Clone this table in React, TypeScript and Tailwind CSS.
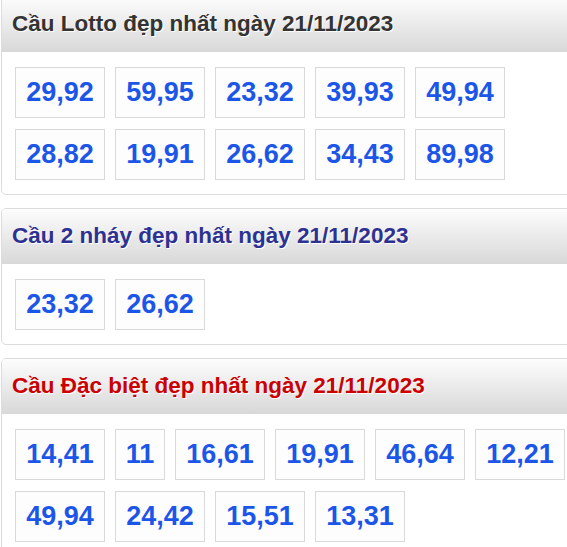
import React from 'react';

const sections = [
  {
    title: 'Cầu Lotto đẹp nhất ngày 21/11/2023',
    color: 'text-[#333333]',
    numbers: ['29,92', '59,95', '23,32', '39,93', '49,94', '28,82', '19,91', '26,62', '34,43', '89,98'],
    rows: [5, 5],
  },
  {
    title: 'Cầu 2 nháy đẹp nhất ngày 21/11/2023',
    color: 'text-[#2d3192]',
    numbers: ['23,32', '26,62'],
    rows: [2],
  },
  {
    title: 'Cầu Đặc biệt đẹp nhất ngày 21/11/2023',
    color: 'text-[#cc0000]',
    numbers: ['14,41', '11', '16,61', '19,91', '46,64', '12,21', '49,94', '24,42', '15,51', '13,31'],
    rows: [6, 4],
  },
];

function chunk(list: string[], sizes: number[]) {
  const out: string[][] = [];
  let i = 0;
  for (const n of sizes) {
    out.push(list.slice(i, i + n));
    i += n;
  }
  return out;
}

export default function App() {
  return (
    <div className="w-[567px] h-[547px] overflow-hidden bg-white font-['Liberation_Sans',Arial,sans-serif]">
      <div className="w-[620px] -mt-[4px] ml-px flex flex-col gap-[13px]">
        {sections.map((s) => (
          <div key={s.title} className="border border-[#dcdcdc] rounded-[5px] overflow-hidden bg-white">
            {/* header */}
            <div className="h-[55px] flex items-center pl-[10px] bg-gradient-to-b from-[#fdfdfd] to-[#d8d8d8]">
              <h2 className={`text-[22.5px] font-bold leading-none [text-shadow:1px_1px_0_#ffffff] ${s.color}`}>
                {s.title}
              </h2>
            </div>
            {/* numbers */}
            <div className="pt-[15px] pb-[14px] pl-[13px] flex flex-col gap-[11px]">
              {chunk(s.numbers, s.rows).map((row, ri) => (
                <div key={ri} className="flex gap-[10px]">
                  {row.map((n) => (
                    <span
                      key={n}
                      className={`h-[51px] ${n.length > 2 ? 'w-[90px]' : 'w-[50px]'} flex items-center justify-center border border-[#d9d9d9] bg-[#fdfdfe] text-[27px] font-bold leading-none text-[#1c56e8]`}
                    >
                      {n}
                    </span>
                  ))}
                </div>
              ))}
            </div>
          </div>
        ))}
      </div>
    </div>
  );
}
